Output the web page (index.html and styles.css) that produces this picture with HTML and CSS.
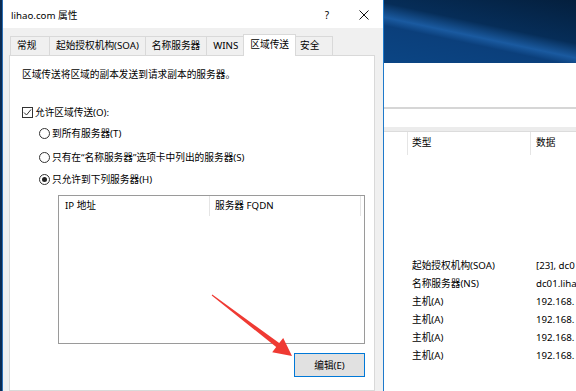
FILE: index.html
```html
<!DOCTYPE html>
<html lang="zh-CN">
<head>
    <meta charset="UTF-8">
    <meta name="viewport" content="width=device-width, initial-scale=1.0">
    <title>lihao.com 属性</title>
    <link rel="stylesheet" href="styles.css">
</head>
<body>
<div class="desk-edge"></div>

<div class="dialog">
    <div class="titlebar">
        <span class="title">lihao.com 属性</span>
        <span class="help">?</span>
        <span class="close">
            <svg width="10" height="10" viewBox="0 0 10 10"><path d="M0.5 0.5L9.5 9.5M9.5 0.5L0.5 9.5" stroke="#111" stroke-width="1"/></svg>
        </span>
    </div>
    <div class="dialog-body">
        <div class="tabs">
            <div class="tab">常规</div>
            <div class="tab">起始授权机构(SOA)</div>
            <div class="tab">名称服务器</div>
            <div class="tab">WINS</div>
            <div class="tab active">区域传送</div>
            <div class="tab">安全</div>
        </div>
        <div class="panel">
            <p class="desc">区域传送将区域的副本发送到请求副本的服务器。</p>
            <div class="row check-row">
                <span class="checkbox">
                    <svg width="9" height="9" viewBox="0 0 9 9"><path d="M1 4.5L3.5 7L8 1.5" fill="none" stroke="#333" stroke-width="1"/></svg>
                </span>
                允许区域传送(O):
            </div>
            <div class="options">
                <div class="row radio-row first"><span class="radio"></span>到所有服务器(T)</div>
                <div class="row radio-row second"><span class="radio"></span>只有在“名称服务器”选项卡中列出的服务器(S)</div>
                <div class="row radio-row third"><span class="radio checked"></span>只允许到下列服务器(H)</div>
            </div>
            <div class="listbox">
                <div class="list-head">
                    <div class="col">IP 地址</div>
                    <div class="col col-fqdn">服务器 FQDN</div>
                </div>
            </div>
            <div class="actions">
                <button class="btn">编辑(E)</button>
            </div>
        </div>
    </div>
</div>

<div class="dns-win">
    <div class="wallpaper"></div>
    <div class="win">
        <div class="win-top"></div>
        <div class="win-toolbar"></div>
        <div class="rec-head">
            <div class="c-name"></div>
            <div class="c-type">类型</div>
            <div class="c-data">数据</div>
        </div>
        <div class="rec-body">
            <div class="rec"><div class="c-name"></div><div class="c-type">起始授权机构(SOA)</div><div class="c-data">[23], dc0</div></div>
            <div class="rec"><div class="c-name"></div><div class="c-type">名称服务器(NS)</div><div class="c-data">dc01.liha</div></div>
            <div class="rec"><div class="c-name"></div><div class="c-type">主机(A)</div><div class="c-data">192.168.</div></div>
            <div class="rec"><div class="c-name"></div><div class="c-type">主机(A)</div><div class="c-data">192.168.</div></div>
            <div class="rec"><div class="c-name"></div><div class="c-type">主机(A)</div><div class="c-data">192.168.</div></div>
            <div class="rec"><div class="c-name"></div><div class="c-type">主机(A)</div><div class="c-data">192.168.</div></div>
        </div>
    </div>
</div>

<!-- red pointer drawn over the dialog -->
<svg class="arrow" width="576" height="391" viewBox="0 0 576 391">
    <polygon points="212.3,294.6 279.2,343.1 283.2,338 292,356 272.2,352.2 276.2,347.1 211.7,295.4" fill="#ef3a33"/>
</svg>
</body>
</html>
```

FILE: styles.css
```css
body {
    margin: 0;
    width: 576px;
    height: 391px;
    overflow: hidden;
    display: flex;
    position: relative;
    background: #0b2b52;
    font-family: "Noto Sans", "Noto Sans CJK SC", sans-serif;
    font-size: 9.7px;
    color: #000;
}
.desk-edge {
    width: 2px;
    flex: none;
}
.dialog {
    width: 380px;
    flex: none;
    display: flex;
    flex-direction: column;
    border-left: 1px solid #2c6fb5;
    border-right: 1px solid #1f7acb;
    background: #f0f0f0;
}
.titlebar {
    height: 28px;
    flex: none;
    display: flex;
    align-items: center;
    box-sizing: border-box;
    padding: 2px 14px 0 8px;
    background: #fff;
}
.title {
    flex: 1;
}
.help {
    width: 20px;
    text-align: center;
    font-size: 10px;
}
.close {
    width: 10px;
    height: 10px;
    margin-left: 22px;
    display: flex;
}
.dialog-body {
    flex: 1;
    display: flex;
    flex-direction: column;
    padding: 8px 8px 0 6px;
}
.tabs {
    display: flex;
    align-items: flex-end;
    height: 19px;
    padding-left: 1px;
}
.tab {
    height: 19px;
    min-width: 40px;
    box-sizing: border-box;
    padding: 0 6px;
    line-height: 18px;
    border: 1px solid #d9d9d9;
    border-bottom: none;
    margin-right: -1px;
    background: #f0f0f0;
    white-space: nowrap;
}
.tab.active {
    height: 22px;
    line-height: 20px;
    margin: 0 -3px -1px -2px;
    padding: 0 6px;
    background: #fff;
    position: relative;
    z-index: 1;
}
.panel {
    flex: 1;
    background: #fff;
    border: 1px solid #d9d9d9;
    padding: 11px 9px 0 12px;
}
.desc {
    margin: 0;
    line-height: 16px;
}
.row {
    display: flex;
    align-items: center;
    height: 16px;
    white-space: nowrap;
}
.check-row {
    margin-top: 21px;
}
.checkbox {
    width: 11px;
    height: 11px;
    box-sizing: border-box;
    border: 1px solid #333;
    margin-right: 2px;
    display: flex;
    align-items: center;
    justify-content: center;
}
.options {
    padding-left: 17px;
}
.radio-row.first {
    margin-top: 5px;
}
.radio-row.second {
    margin-top: 8px;
}
.radio-row.third {
    margin-top: 6px;
}
.radio {
    width: 11px;
    height: 11px;
    box-sizing: border-box;
    border: 1px solid #333;
    border-radius: 50%;
    margin-right: 2px;
    display: flex;
    align-items: center;
    justify-content: center;
}
.radio.checked::after {
    content: "";
    width: 5px;
    height: 5px;
    border-radius: 50%;
    background: #222;
}
.listbox {
    margin: 8px 0 0 36px;
    height: 149px;
    box-sizing: border-box;
    border: 1px solid #9a9a9a;
}
.list-head {
    display: flex;
    height: 20px;
}
.list-head .col {
    width: 151px;
    flex: none;
    padding-left: 6px;
    box-sizing: border-box;
    line-height: 20px;
    border-right: 1px solid #e5e5e5;
}
.list-head .col-fqdn {
    padding-left: 5px;
}
.actions {
    display: flex;
    justify-content: flex-end;
    margin-top: 9px;
}
.btn {
    width: 71px;
    height: 24px;
    border: 1px solid #0078d7;
    background: #e1e1e1;
    font: inherit;
    color: #000;
    padding: 0;
}
.dns-win {
    flex: 1;
    display: flex;
    flex-direction: column;
}
.wallpaper {
    height: 63px;
    flex: none;
    background: linear-gradient(192deg, #041f3d 0%, #062d58 42%, #1a5aa0 56%, #0b3f7b 64%, #0b4584 100%);
}
.win {
    flex: 1;
    background: #fff;
}
.win-top {
    height: 44px;
    border-bottom: 2px solid #d6d6d6;
}
.win-toolbar {
    height: 18px;
    border-bottom: 4px solid #ececec;
}
.rec-head {
    display: flex;
    height: 23px;
    border-top: 1px solid #dcdcdc;
}
.rec-head > div {
    line-height: 22px;
    border-right: 1px solid #e5e5e5;
}
.c-name {
    width: 23px;
    flex: none;
}
.c-type {
    width: 123px;
    flex: none;
    padding-left: 4px;
    box-sizing: border-box;
}
.c-data {
    flex: 1;
    padding-left: 5px;
    white-space: nowrap;
}
.rec-body {
    padding-top: 102px;
}
.rec {
    display: flex;
    height: 18px;
    line-height: 18px;
}
.rec .c-name {
    border-right: 1px solid transparent;
}
.rec .c-type {
    border-right: 1px solid transparent;
}
.arrow {
    position: absolute;
    left: 0;
    top: 0;
    pointer-events: none;
}
```
